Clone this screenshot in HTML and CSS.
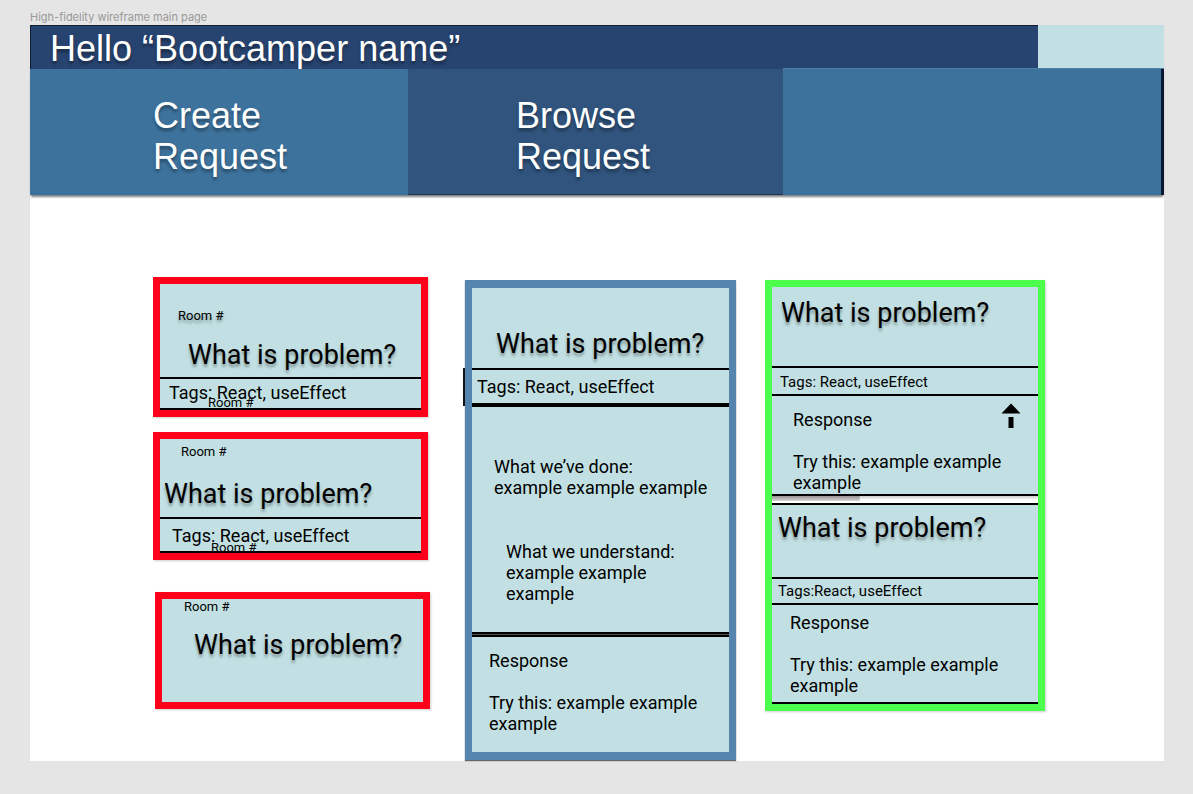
FILE: index.html
```html
<!DOCTYPE html>
<html lang="en">
<head>
<meta charset="utf-8">
<title>High-fidelity wireframe main page</title>
<link rel="stylesheet" href="styles.css">
</head>
<body>
<p class="frame-label">High-fidelity wireframe main page</p>
<div class="frame">
  <header class="header">
    <h1 class="greeting">Hello “Bootcamper name”</h1>
    <div class="account"></div>
  </header>
  <nav class="nav">
    <a class="tab tab-create" href="#create">Create<br>Request</a>
    <a class="tab tab-browse" href="#browse">Browse<br>Request</a>
    <div class="tab tab-empty"></div>
  </nav>
  <main class="board">
    <section class="column requests">
      <article class="card first">
        <div class="summary">
          <p class="room soft">Room #</p>
          <h2 class="title">What is problem?</h2>
        </div>
        <div class="tags">Tags: React, useEffect<span class="room room-over">Room #</span></div>
      </article>
      <article class="card second">
        <div class="summary">
          <p class="room">Room #</p>
          <h2 class="title">What is problem?</h2>
        </div>
        <div class="tags">Tags: React, useEffect<span class="room room-over">Room #</span></div>
      </article>
      <article class="card third">
        <div class="summary">
          <p class="room">Room #</p>
          <h2 class="title">What is problem?</h2>
        </div>
      </article>
    </section>

    <section class="column">
      <article class="card detail">
        <h2 class="title">What is problem?</h2>
        <div class="tags">Tags: React, useEffect</div>
        <div class="notes">
          <p class="text">What we’ve done:<br>example example example</p>
          <p class="text understand">What we understand:<br>example example<br>example</p>
        </div>
        <div class="rule"></div>
        <div class="response text">
          <p>Response</p>
          <p>Try this: example example<br>example</p>
        </div>
      </article>
    </section>

    <section class="column">
      <div class="card answers">
        <article class="answer upper">
          <h2 class="title">What is problem?</h2>
          <div class="tags small">Tags: React, useEffect</div>
          <div class="response text">
            <p>Response</p>
            <p>Try this: example example<br>example</p>
            <button class="upvote" type="button" aria-label="Upvote">
              <svg width="20" height="26" viewBox="0 0 20 26"><path d="M0.5 10.5 10 0.5 19.5 10.5zM7.500 14h5v11h-5z"/></svg>
            </button>
          </div>
        </article>
        <div class="divider"></div>
        <article class="answer lower">
          <h2 class="title">What is problem?</h2>
          <div class="tags small">Tags:React, useEffect</div>
          <div class="response text">
            <p>Response</p>
            <p>Try this: example example<br>example</p>
          </div>
        </article>
      </div>
    </section>
  </main>
</div>
</body>
</html>
```
FILE: styles.css
```css
* { box-sizing: border-box; }

body {
  margin: 0;
  padding: 10px 29px 33px 30px;
  background: #e5e5e5;
  color: #000;
  font-family: Roboto, "Noto Sans", sans-serif;
}

h1, h2, p { margin: 0; font-weight: 400; }

.frame-label {
  font: 11px/15px Inter, sans-serif;
  color: #999;
}

.frame { background: #fff; padding-bottom: 1px; }

/* Header and navigation */
.header { display: flex; background: #27436f; }

.greeting {
  flex: 1;
  padding: 3px 0 0 19px;
  border-top: 1px solid #111d31;
  border-left: 1px solid #111d31;
  font: 36px/40px "Liberation Sans", Arial, sans-serif;
  color: #fff;
  text-shadow: 0 3px 3px rgba(0, 0, 0, .35);
}

.account { width: 126px; background: #c2e0e3; }

.nav {
  display: grid;
  grid-template-columns: 378fr 375fr 381fr;
  box-shadow: 0 3px 2px -1px rgba(0, 0, 0, .5);
}

.tab {
  padding: 26px 0 17px;
  background: #3d729c;
  font: 36px/41px "Liberation Sans", Arial, sans-serif;
  color: #fff;
  text-decoration: none;
  text-shadow: 0 3px 3px rgba(0, 0, 0, .35);
}

.tab-create { padding-left: 123px; }

.tab-browse {
  padding-left: 108px;
  background: #30547d;
  border-bottom: 1px solid #1e3553;
}

.tab-empty {
  border-right: 3px solid #0b1730;
  box-shadow: 0 -1px 0 #4d7fa5;
}

/* Board */
.board {
  display: grid;
  grid-template-columns: 283fr 271fr 280fr;
  gap: 29px;
  align-items: start;
  padding: 82px 119px 0 123px;
}

.column { margin-top: 3px; }

.requests { margin: 0 8px 0 0; }

.card {
  border: 7px solid #ff001a;
  background: #c2e0e3;
  box-shadow: 1px 1px 2px rgba(0, 0, 0, .2);
}

.title {
  font-size: 27px;
  line-height: 32px;
  white-space: nowrap;
  text-shadow: 0 3px 3px rgba(0, 0, 0, .35);
}

.room {
  font-size: 13px;
  line-height: 15px;
}

.soft { text-shadow: 0 3px 3px rgba(0, 0, 0, .35); }

.text, .tags { font-size: 18px; line-height: 21px; }

.tags {
  position: relative;
  border: solid #000;
  border-width: 2px 0;
}

.room-over { position: absolute; }

/* Request cards */
.first .summary { padding: 24px 0 6px 18px; }
.first .title { margin-top: 16px; padding-left: 10px; }
.first .tags { padding: 3px 0 5px 9px; }
.first .room-over { left: 48px; top: 16px; }

.second { margin-top: 15px; }
.second .summary { padding: 5px 0 7px 4px; }
.second .room:not(.room-over) { padding-left: 17px; }
.second .title { margin-top: 19px; }
.second .tags { padding: 6px 0 5px 12px; }
.second .room-over { left: 51px; top: 21px; }

.third { margin: 32px -2px 0 2px; }
.third .summary { padding: 0 0 41px 22px; }
.third .title { margin-top: 15px; padding-left: 10px; }

/* Detail card */
.detail {
  border-color: #5584ae;
  border-width: 8px 7px;
  box-shadow: 0 1px 1px rgba(0, 0, 0, .6);
}

.detail .title { padding: 40px 0 8px 24px; }
.detail .tags { padding: 6px 0 6px 5px; border-bottom-width: 4px; }

.detail .tags::before {
  content: "";
  position: absolute;
  left: -9px;
  top: -2px;
  width: 2px;
  height: 38px;
  background: #111;
}

.notes { padding: 49px 0 28px 22px; }
.understand { margin-top: 43px; padding-left: 12px; }

.rule {
  height: 5px;
  border: solid #000;
  border-width: 2px 0;
  background: #555;
}

.response { position: relative; }
.response p + p { margin-top: 21px; }

.detail .response { padding: 13px 0 18px 17px; }

/* Answer cards */
.answers { border-color: #4cff4c; }

.small { font-size: 15px; line-height: 18px; }

.answer .response { border-bottom: 2px solid #000; }

.upper .title { padding: 10px 0 37px 9px; }
.upper .tags { padding: 5px 0 3px 8px; }
.upper .response { padding: 13px 0 1px 21px; }

.upvote {
  position: absolute;
  top: 7px;
  right: 17px;
  padding: 0;
  border: 0;
  background: none;
}

.upvote svg { display: block; }

.divider {
  height: 7px;
  background:
    linear-gradient(#98908f, #d8d8d8) 0 0 / 33% 5px no-repeat,
    linear-gradient(#ccc, #fff 4px);
}

.lower { border-top: 2px solid #000; }
.lower .title { padding: 7px 0 33px 6px; }
.lower .tags { padding: 3px 0 3px 6px; }
.lower .response { padding: 7px 0 6px 18px; }
```
